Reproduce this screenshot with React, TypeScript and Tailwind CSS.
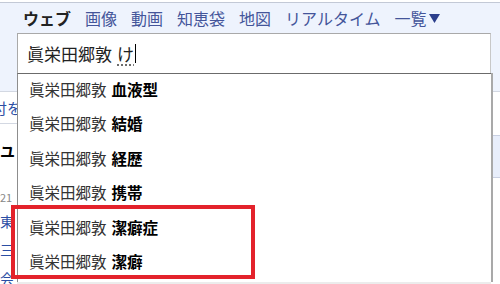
const tabs = ["画像", "動画", "知恵袋", "地図", "リアルタイム"];

const suggestions = ["血液型", "結婚", "経歴", "携帯", "潔癖症", "潔癖"];

const SuggestRow = ({ word }: { word: string }) => (
  <li className="flex h-[34.4px] items-center pb-[3px] pl-[11px] text-[15.5px] leading-none">
    <span className="text-[#333]">眞栄田郷敦</span>
    <span className="w-[5px]" />
    <span className="font-bold text-black">{word}</span>
  </li>
);

export default function App() {
  return (
    <div className="relative h-[284px] w-[500px] overflow-hidden bg-white pt-[2px] font-['Noto_Sans_CJK_JP','Noto_Sans_CJK_SC',sans-serif]">
      <header className="h-[90px] border-y border-t-[#c3c9d6] border-b-[#d3d8e2] bg-[#eef3fd] pl-[17px]">
        <nav className="flex h-[30px] items-center gap-[14px] pl-[6px] text-[16px] leading-none text-[#44559a]">
          <span className="font-bold text-[#222]">ウェブ</span>
          {tabs.map((tab) => (
            <span key={tab}>{tab}</span>
          ))}
          <span className="flex items-center gap-[2px]">
            一覧
            <svg width="11" height="9" viewBox="0 0 11 9">
              <path d="M0 0h11L5.5 9z" fill="#2c3f8c" />
            </svg>
          </span>
        </nav>
        <div className="flex h-[40px] w-[474px] items-center border border-b-0 border-[#a9a9a9] border-r-[#c8c8c8] bg-white pl-[9px] text-[17px] leading-none text-[#222]">
          <span>眞栄田郷敦</span>
          <span className="w-[5px]" />
          <span className="underline decoration-dotted decoration-[#555] underline-offset-[4px]">け</span>
          <span className="ml-[1px] h-[19px] w-[1px] bg-black" />
        </div>
      </header>

      <div className="flex">
        <div className="flex w-[17px] flex-col text-[14px] leading-none">
          <div className="flex h-[32px] items-center border-b border-[#d3d8e2] text-[15px] text-[#2b4ea4]">
            <span className="-ml-[8px]">付</span>
            <span>を</span>
          </div>
          <div className="flex h-[52px] items-center text-[15px] font-bold text-black">ユ</div>
          <div className="mt-[10px] flex h-[22px] items-center text-[11px] text-[#888]">21</div>
          <div className="flex h-[26px] items-center text-[#2b4ea4]">東</div>
          <div className="flex h-[29px] items-center text-[#2b4ea4]">三</div>
          <div className="flex h-[29px] items-start pt-[8px] text-[#2b4ea4]">会</div>
        </div>
        <div className="flex-1" />
        <div className="w-[9px]">
          <div className="h-[43px]" />
          <div className="h-[43px] border-y border-[#c9d0e2] bg-[#e8eefb]" />
        </div>
      </div>

      <ul className="absolute left-[17px] top-[73px] h-[209px] w-[474px] border-l border-t border-[#8d8d8d] border-t-[#6b6b6b] bg-white shadow-[2px_0_0_#a9a9a9,0_2px_0_#ececec]">
        {suggestions.map((word) => (
          <SuggestRow key={word} word={word} />
        ))}
      </ul>

      <div className="absolute left-[11px] top-[205px] h-[74px] w-[244px] border-4 border-[#e3222b]" />
    </div>
  );
}
